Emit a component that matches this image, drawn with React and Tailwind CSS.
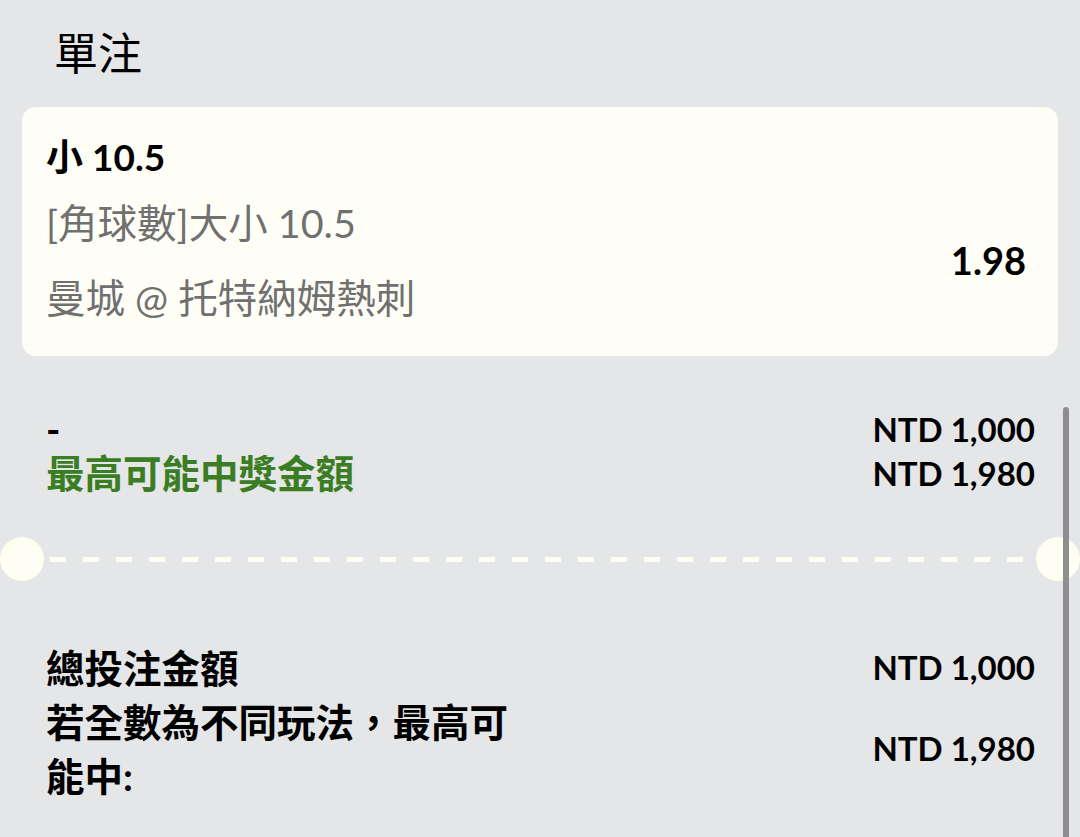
import React from 'react';

const font = "font-['Lato','Noto_Sans_CJK_TC',sans-serif]";

function Row({ left, right, leftClass = '', rightClass = '' }) {
    return (
        <div className="flex items-center justify-between">
            <div className={leftClass}>{left}</div>
            <div className={rightClass}>{right}</div>
        </div>
    );
}

export default function App() {
    return (
        <div className={`relative min-h-[837px] h-[837px] overflow-hidden bg-[#e5e6e8] text-black ${font}`}>

            {/* Header */}
            <div className="h-[107px] pl-[54px] pt-[30px]">
                <h1 className="text-[44px] leading-[46px] font-normal">單注</h1>
            </div>

            {/* Selection card */}
            <div className="mx-[22px] h-[249px] rounded-[14px] bg-[#fffef6] pl-[24px] pr-[32px] pt-[30px]">
                <div className="text-[37px] leading-[40px] font-bold">小 10.5</div>
                <div className="flex items-center justify-between mt-[8px]">
                    <div className="text-[39.5px] text-[#707070]">
                        <div className="leading-[75px]">[角球數]大小 10.5</div>
                        <div className="leading-[75px]">曼城 @ 托特納姆熱刺</div>
                    </div>
                    <div className="text-[38px] font-bold">1.98</div>
                </div>
            </div>

            {/* Stake summary */}
            <div className="pl-[46px] pr-[45px] pt-[51px] font-bold">
                <div className="flex justify-between">
                    <div className="text-[38.5px] leading-[44px]">
                        <div>-</div>
                        <div className="text-[#3b7d23]">最高可能中獎金額</div>
                    </div>
                    <div className="text-[33px] leading-[44px] text-right">
                        <div>NTD 1,000</div>
                        <div>NTD 1,980</div>
                    </div>
                </div>
            </div>

            {/* Ticket divider */}
            <div className="mt-[42px] flex items-center h-[44px]">
                <div className="w-[44px] h-[44px] rounded-full bg-[#fffef2] shrink-0"></div>
                <div className="flex-1 mx-[6px] h-[5px] bg-[repeating-linear-gradient(90deg,#fffef2_0_16px,transparent_16px_33px)]"></div>
                <div className="w-[44px] h-[44px] rounded-full bg-[#fffef2] shrink-0"></div>
            </div>

            {/* Totals */}
            <div className="pl-[46px] pr-[45px] pt-[60px] font-bold">
                <Row
                    left="總投注金額"
                    right="NTD 1,000"
                    leftClass="text-[38.5px] leading-[54px]"
                    rightClass="text-[33px]"
                />
                <Row
                    left="若全數為不同玩法，最高可能中:"
                    right="NTD 1,980"
                    leftClass="text-[38.5px] leading-[54px] w-[480px]"
                    rightClass="text-[33px]"
                />
            </div>

            {/* Scrollbar */}
            <div className="absolute left-[1063px] top-[407px] w-[6px] h-[460px] rounded-full bg-[#8e8e90]"></div>
        </div>
    );
}
